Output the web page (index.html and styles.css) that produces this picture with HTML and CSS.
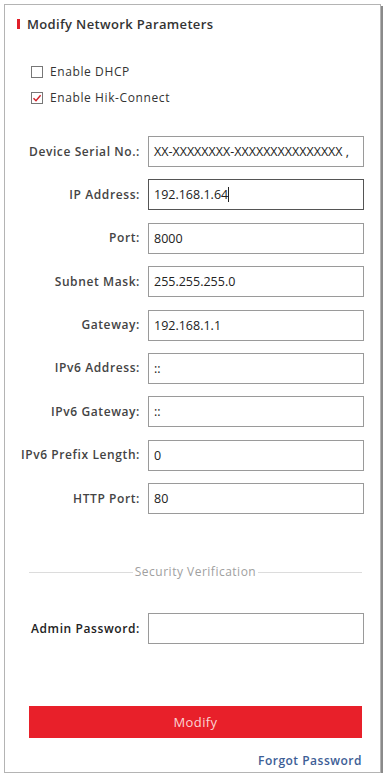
FILE: index.html
```html
<!DOCTYPE html>
<html lang="en">
<head>
    <meta charset="UTF-8">
    <title>Modify Network Parameters</title>
    <link rel="stylesheet" href="styles.css">
</head>
<body>
<div class="panel">
    <h2 class="title"><span class="mark"></span>Modify Network Parameters</h2>

    <ul class="checks">
        <li><span class="box"></span>Enable DHCP</li>
        <li><span class="box checked"><svg width="10" height="10" viewBox="0 0 10 10"><path d="M1.5 5.2 L4 7.8 L8.6 2.2" fill="none" stroke="#d0202a" stroke-width="1.4"/></svg></span>Enable Hik-Connect</li>
    </ul>

    <div class="form">
        <div class="row"><label>Device Serial No.:</label><div class="field">XX-XXXXXXXX-XXXXXXXXXXXXXXX ,</div></div>
        <div class="row"><label>IP Address:</label><div class="field focus">192.168.1.64<span class="caret"></span></div></div>
        <div class="row"><label>Port:</label><div class="field">8000</div></div>
        <div class="row"><label>Subnet Mask:</label><div class="field">255.255.255.0</div></div>
        <div class="row"><label>Gateway:</label><div class="field">192.168.1.1</div></div>
        <div class="row"><label>IPv6 Address:</label><div class="field">::</div></div>
        <div class="row"><label>IPv6 Gateway:</label><div class="field">::</div></div>
        <div class="row"><label>IPv6 Prefix Length:</label><div class="field">0</div></div>
        <div class="row"><label>HTTP Port:</label><div class="field">80</div></div>
    </div>

    <div class="divider"><span>Security Verification</span></div>

    <div class="row admin"><label>Admin Password:</label><div class="field"></div></div>

    <div class="btn">Modify</div>
    <div class="forgot">Forgot Password</div>
</div>
</body>
</html>
```

FILE: styles.css
```css
body,div,ul,li,h2{
    margin:0;
    padding:0;
}
ul{
    list-style-type:none;
}
body{
    background:#fff;
    font:12px/16px "Open Sans", Arial, sans-serif;
    color:#333;
}
.panel{
    box-sizing:border-box;
    margin:4px 0 0 4px;
    width:377px;
    height:769px;
    border:1px solid #b4b4b4;
    box-shadow:2px 2px 0 #8a8a8a;
    display:flex;
    flex-direction:column;
}
.title{
    display:flex;
    align-items:center;
    margin-top:10px;
    padding-left:12px;
    font-size:13px;
    line-height:18px;
    font-weight:600;
    letter-spacing:0.35px;
    color:#333;
}
.title .mark{
    width:3px;
    height:10px;
    background:#e0202a;
    margin-right:7px;
}
.checks{
    margin-top:30px;
    padding-left:26px;
}
.checks li{
    display:flex;
    align-items:center;
    height:18px;
    margin-bottom:8px;
    color:#333;
    letter-spacing:0.6px;
}
.box{
    box-sizing:border-box;
    width:12px;
    height:12px;
    border:1px solid #777;
    margin-right:7px;
    display:flex;
    align-items:center;
    justify-content:center;
}
.form{
    margin-top:21px;
    display:flex;
    flex-direction:column;
    gap:12.4px;
}
.row{
    display:flex;
    align-items:center;
}
.row label{
    width:135px;
    text-align:right;
    font-weight:600;
    letter-spacing:0.6px;
    color:#444;
    white-space:nowrap;
}
.field{
    box-sizing:border-box;
    margin-left:8px;
    width:216px;
    height:31px;
    border:1px solid #9a9a9a;
    padding-left:5px;
    font-size:12.5px;
    line-height:29px;
    color:#222;
    white-space:nowrap;
    overflow:hidden;
}
.field.focus{
    border-color:#555;
}
.caret{
    display:inline-block;
    width:1px;
    height:15px;
    background:#222;
    vertical-align:-3px;
}
.divider{
    margin:50px 18px 0 24px;
    display:flex;
    align-items:center;
    color:#a0a0a0;
    font-size:12px;
    letter-spacing:0.5px;
}
.divider:before,.divider:after{
    content:"";
    flex:1;
    height:1px;
    background:#dcdcdc;
}
.divider span{
    padding:0 2px;
}
.admin{
    margin-top:33px;
}
.admin label{
    color:#222;
}
.btn{
    margin:62px 18px 0 24px;
    height:32px;
    line-height:32px;
    background:#e8202a;
    color:#fbd4d4;
    text-align:center;
    font-size:13px;
    letter-spacing:0.4px;
}
.forgot{
    margin:15px 18px 0 0;
    text-align:right;
    font-weight:600;
    letter-spacing:0.5px;
    color:#3d5e96;
}
```
